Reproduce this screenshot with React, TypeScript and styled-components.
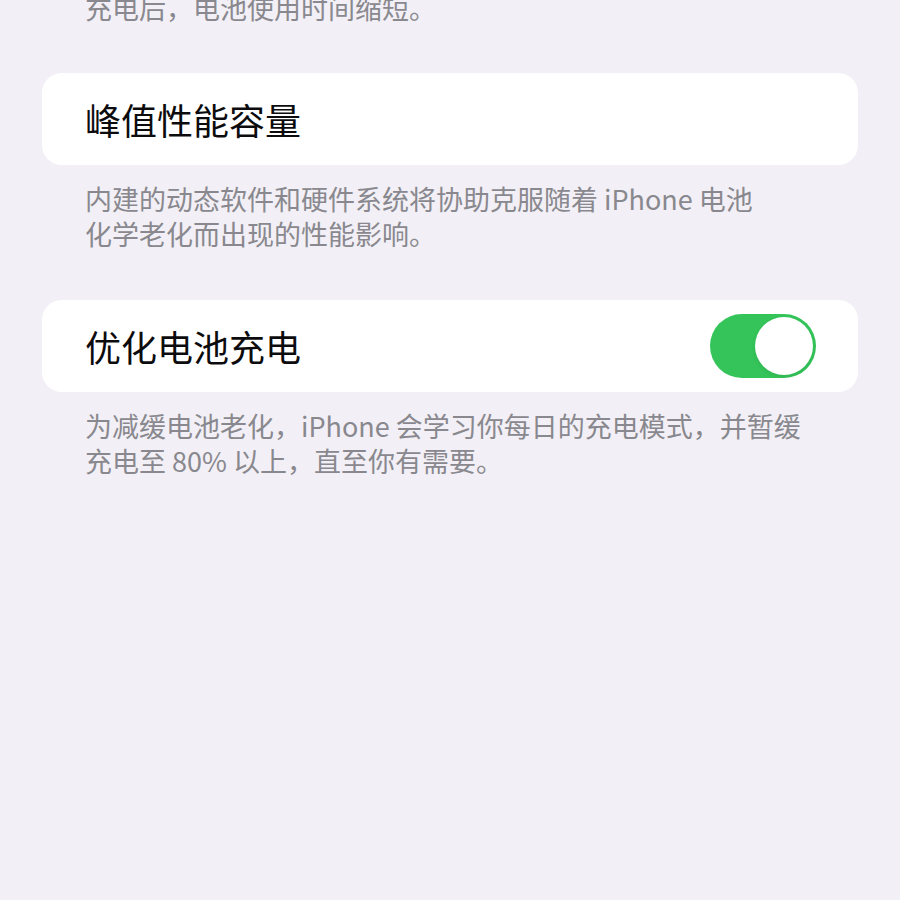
import React, { useState } from "react";
import styled, { createGlobalStyle } from "styled-components";

const GlobalStyle = createGlobalStyle`
  html, body {
    margin: 0;
    padding: 0;
    background: #f2f0f6;
  }
  body {
    font-family: "Noto Sans CJK SC", "Noto Sans", sans-serif;
    -webkit-font-smoothing: antialiased;
  }
`;

const Screen = styled.div`
  width: 900px;
  min-height: 900px;
  box-sizing: border-box;
  padding: 0 42px;
  margin-top: -10px;
  display: flex;
  flex-direction: column;
`;

const Section = styled.section<{ first?: boolean }>`
  display: flex;
  flex-direction: column;
  margin-top: ${({ first }) => (first ? "48px" : "49px")};
`;

const Card = styled.div`
  height: 92px;
  background: #ffffff;
  border-radius: 20px;
  padding: 0 42px 0 43px;
  display: flex;
  align-items: center;
  justify-content: space-between;
`;

const Label = styled.div`
  font-size: 36px;
  color: #0c0c0e;
  letter-spacing: 0;
`;

const Note = styled.p<{ flush?: boolean }>`
  margin: 0;
  padding: ${({ flush }) => (flush ? "0" : "16px")} 43px 0;
  font-size: 27px;
  line-height: 35px;
  color: #89888e;
  white-space: nowrap;
`;

const Track = styled.button<{ on: boolean }>`
  width: 106px;
  height: 64px;
  border: none;
  padding: 3px;
  border-radius: 32px;
  background: ${({ on }) => (on ? "#34c459" : "#e6e5ea")};
  display: flex;
  justify-content: ${({ on }) => (on ? "flex-end" : "flex-start")};
  cursor: pointer;
`;

const Knob = styled.span`
  width: 58px;
  height: 58px;
  border-radius: 50%;
  background: #ffffff;
  box-shadow: 0 2px 4px rgba(0, 0, 0, 0.08);
`;

function Toggle() {
  const [on, setOn] = useState(true);
  return (
    <Track on={on} onClick={() => setOn(!on)} aria-pressed={on}>
      <Knob />
    </Track>
  );
}

export default function App() {
  return (
    <>
      <GlobalStyle />
      <Screen>
        <Note flush>充电后，电池使用时间缩短。</Note>

        <Section first>
          <Card>
            <Label>峰值性能容量</Label>
          </Card>
          <Note>
            内建的动态软件和硬件系统将协助克服随着 iPhone 电池
            <br />
            化学老化而出现的性能影响。
          </Note>
        </Section>

        <Section>
          <Card>
            <Label>优化电池充电</Label>
            <Toggle />
          </Card>
          <Note>
            为减缓电池老化，iPhone 会学习你每日的充电模式，并暂缓
            <br />
            充电至 80% 以上，直至你有需要。
          </Note>
        </Section>
      </Screen>
    </>
  );
}
